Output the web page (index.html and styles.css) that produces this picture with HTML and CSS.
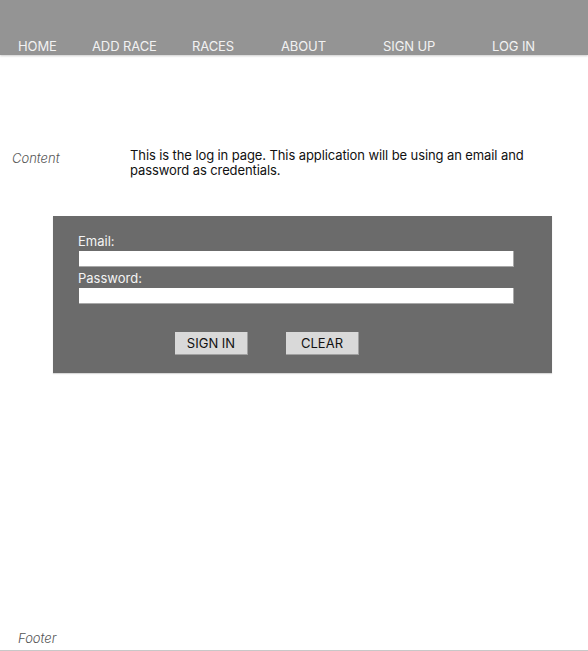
FILE: index.html
```html
<!DOCTYPE html>
<html lang="en">
<head>
<meta charset="utf-8">
<title>Log in</title>
<link rel="stylesheet" href="styles.css">
</head>
<body>
<header class="site-header">
  <nav class="nav">
    <a class="nav-link" href="#">HOME</a>
    <a class="nav-link" href="#">ADD RACE</a>
    <a class="nav-link" href="#">RACES</a>
    <a class="nav-link" href="#">ABOUT</a>
    <a class="nav-link" href="#">SIGN UP</a>
    <a class="nav-link" href="#">LOG IN</a>
  </nav>
</header>
<main class="main">
  <section class="content-row">
    <span class="section-label">Content</span>
    <p class="intro">This is the log in page. This application will be using an email and password as credentials.</p>
  </section>
  <form class="login-panel">
    <label class="field-label" for="email">Email:</label>
    <input class="field-input" id="email" type="email">
    <label class="field-label" for="password">Password:</label>
    <input class="field-input" id="password" type="password">
    <div class="actions">
      <button class="btn" type="submit">SIGN IN</button>
      <button class="btn" type="reset">CLEAR</button>
    </div>
  </form>
</main>
<footer class="site-footer">
  <span class="section-label footer-label">Footer</span>
</footer>
</body>
</html>
```
FILE: styles.css
```css
html, body {
  margin: 0;
  padding: 0;
}
body {
  font-family: Inter, "Noto Sans", sans-serif;
  font-size: 13px;
  line-height: 16px;
  color: #1a1a1a;
  background: #ffffff;
  min-height: 100vh;
  display: flex;
  flex-direction: column;
  box-sizing: border-box;
}
.site-header {
  height: 55px;
  background: #949494;
  box-shadow: 0 1px 2px rgba(0, 0, 0, 0.2);
  display: flex;
  align-items: flex-end;
}
.nav {
  display: grid;
  grid-template-columns: 74px 100px 89px 102px 109px auto;
  padding-left: 18px;
  padding-bottom: 1px;
}
.nav-link {
  color: #f2f2f2;
  text-decoration: none;
  font-size: 13px;
  line-height: 16px;
  letter-spacing: -0.1px;
}
.main {
  flex: 1;
  display: flex;
  flex-direction: column;
}
.content-row {
  display: flex;
  align-items: flex-start;
  margin-top: 93px;
  padding-left: 12px;
}
.section-label {
  font-style: italic;
  font-weight: 300;
  color: #555;
  font-size: 13px;
}
.content-row .section-label {
  width: 118px;
  margin-top: 2px;
}
.intro {
  margin: 0;
  width: 420px;
  line-height: 15px;
  color: #111;
  letter-spacing: -0.1px;
}
.login-panel {
  margin: 38px 0 0 53px;
  width: 499px;
  box-sizing: border-box;
  background: #6b6b6b;
  padding: 17px 38px 18px 25px;
  display: flex;
  flex-direction: column;
  box-shadow: 0 1px 1px rgba(0, 0, 0, 0.15);
}
.field-label {
  color: #f4f4f4;
  line-height: 16px;
}
.field-input {
  margin: 2px 0 3px 1px;
  width: 435px;
  height: 16px;
  box-sizing: border-box;
  border: none;
  border-right: 1px solid #a8a8a8;
  border-bottom: 1px solid #a8a8a8;
  background: #ffffff;
  padding: 0;
  font: inherit;
}
.actions {
  display: flex;
  gap: 38px;
  margin-top: 25px;
  padding-left: 97px;
}
.btn {
  width: 73px;
  height: 23px;
  box-sizing: border-box;
  background: #d9d9d9;
  border: none;
  border-right: 1px solid #a0a0a0;
  border-bottom: 1px solid #a0a0a0;
  font-family: Inter, "Noto Sans", sans-serif;
  font-size: 13px;
  color: #111;
  padding: 0;
}
.site-footer {
  padding: 0 0 4px 18px;
  border-bottom: 1px solid #c8c8c8;
  height: 21px;
  box-sizing: border-box;
}
.footer-label {
  display: block;
  line-height: 16px;
}
```
